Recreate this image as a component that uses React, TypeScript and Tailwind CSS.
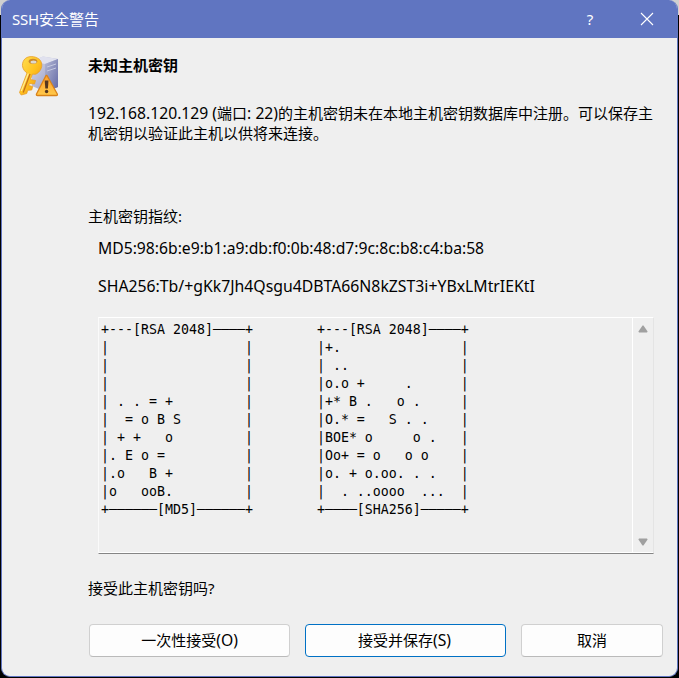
import type { ReactNode } from "react";

const ART = [
  "+---[RSA 2048]────+        +---[RSA 2048]────+",
  "|                 |        |+.               |",
  "|                 |        | ..              |",
  "|                 |        |o.o +     .      |",
  "| . . = +         |        |+* B .   o .     |",
  "|  = o B S        |        |O.* =   S . .    |",
  "| + +   o         |        |BOE* o     o .   |",
  "|. E o =          |        |Oo+ = o   o o    |",
  "|.o   B +         |        |o. + o.oo. . .   |",
  "|o   ooB.         |        |  . ..oooo  ...  |",
  "+──────[MD5]──────+        +────[SHA256]─────+",
];

function KeyIcon() {
  return (
    <svg width="42" height="44" viewBox="0 0 42 44" aria-hidden="true">
      <defs>
        <linearGradient id="box" x1="0" x2="1" y1="0" y2="1">
          <stop offset="0" stopColor="#d8daea" />
          <stop offset="1" stopColor="#8c91bd" />
        </linearGradient>
        <linearGradient id="side" x1="0" x2="1" y1="0" y2="1">
          <stop offset="0" stopColor="#b4b8d4" />
          <stop offset="1" stopColor="#6167a5" />
        </linearGradient>
        <linearGradient id="gold" x1="0" x2="1" y1="0" y2="1">
          <stop offset="0" stopColor="#ffe25a" />
          <stop offset=".5" stopColor="#ffc21f" />
          <stop offset="1" stopColor="#e88a12" />
        </linearGradient>
        <linearGradient id="warn" x1="0" x2="0" y1="0" y2="1">
          <stop offset="0" stopColor="#ff9f2c" />
          <stop offset="1" stopColor="#ffc94a" />
        </linearGradient>
      </defs>
      <path d="M14 6 25 1.500 40 4v28l-12 5-14-6z" fill="url(#box)" />
      <path d="M14 6 25 1.500 40 4 27 9z" fill="#e0e1ee" />
      <path d="M27 9 40 4v28l-13 5z" fill="url(#side)" />
      <path d="m29 12 9-3M29 16l9-3" stroke="#c5c9e0" strokeWidth="1" />
      <path
        d="M6 5C9 .5 17 .5 21.500 4.500c4 4 2.500 11-2.500 14-1.500 1-3 1-4.500.5l-2 5.500 5 1-1 3.500-5-.5-.8 2 4 1-1 3.500-4 .3-1 3.200-5.500 1.500-1.700-2.500L9 18C4.500 15 3 9.500 6 5z"
        fill="url(#gold)"
        stroke="#e8a02a"
        strokeWidth=".8"
      />
      <path d="m12 19-6.800 18.500" stroke="#c4701c" strokeWidth="1.300" />
      <path d="m10.300 18.500-7 17.500" stroke="#ffec96" strokeWidth="1.200" />
      <ellipse cx="15" cy="6.300" rx="4.300" ry="2.600" fill="#c9892c" />
      <ellipse cx="15.500" cy="7" rx="3" ry="1.600" fill="#ddd8ce" />
      <path
        d="M29 20.500 39.300 39q.5 1.500-1 1.500H19.500q-1.500 0-1-1.500L28 20.500z"
        fill="url(#warn)"
        stroke="#d98218"
        strokeWidth="1.300"
        strokeLinejoin="round"
      />
      <path d="M26.700 25.500h3.800l-.6 8h-2.600z" fill="#55371f" />
      <circle cx="28.600" cy="36.500" r="1.700" fill="#55371f" />
    </svg>
  );
}

function DialogButton({ children, className }: { children: ReactNode; className: string }) {
  return (
    <button className={`flex h-[33px] items-center justify-center rounded border bg-[#fdfdfd] pb-px ${className}`}>
      {children}
    </button>
  );
}

function Latin({ children }: { children: ReactNode }) {
  return <span className="text-[15.7px] leading-none">{children}</span>;
}

export default function App() {
  return (
    <div className="h-[678px] w-[679px] overflow-hidden bg-[linear-gradient(#d0d0d0_0_15px,#000_15px)] pr-px pl-px font-['Noto_Sans','Noto_Sans_CJK_SC',sans-serif] text-[15px] leading-5 text-black">
      <div className="flex h-[677px] flex-col overflow-hidden rounded-[9px] border-x border-b border-[#6075c1] bg-[#efefef]">
        <header className="flex h-[38px] shrink-0 items-center bg-[#6075c1] pr-px pb-px pl-[10px] text-white">
          <h1 className="grow text-[15px]">
            <span className="tracking-[-0.2px]">SSH</span>安全警告
          </h1>
          <button className="flex h-full w-[56px] items-center justify-center pt-px text-[15px]">?</button>
          <button className="flex h-full w-[58px] items-center justify-center pt-px">
            <svg width="14" height="14" viewBox="0 0 14 14" fill="none" stroke="#fff" strokeWidth="1.1">
              <path d="m1 1 12 12M13 1 1 13" />
            </svg>
          </button>
        </header>

        <main className="flex pt-[17px]">
          <div className="w-[86px] shrink-0 pl-4">
            <KeyIcon />
          </div>
          <div className="w-[580px]">
            <h2 className="h-12 font-bold">未知主机密钥</h2>
            <p className="h-[103px] whitespace-nowrap">
              <Latin>192.168.120.129 (</Latin>端口<Latin>: 22)</Latin>的主机密钥未在本地主机密钥数据库中注册。可以保存主
              <br />
              机密钥以验证此主机以供将来连接。
            </p>
            <p className="h-8">主机密钥指纹:</p>
            <p className="h-[38px] pl-[10px] text-[15.7px]">MD5:98:6b:e9:b1:a9:db:f0:0b:48:d7:9c:8c:b8:c4:ba:58</p>
            <p className="h-[41px] pl-[10px] text-[15.8px]">SHA256:Tb/+gKk7Jh4Qsgu4DBTA66N8kZST3i+YBxLMtrIEKtI</p>
            <div className="ml-[10px] flex h-[237px] w-[556px] border border-t-white border-r-[#e4e4e4] border-b-[#858585] border-l-[#fafafa]">
              <pre className="grow border-b border-white pt-[3px] pl-[2px] font-['DejaVu_Sans_Mono',monospace] text-[13.29px] leading-[18px]">
                {ART.join("\n")}
              </pre>
              <div className="flex w-[21px] flex-col items-center justify-between border-b border-l border-white pt-[7px] pb-[6px]">
                <svg width="10" height="8" viewBox="0 0 10 8">
                  <path d="M4.500.4h1L9.600 6.500 9 7.500H1L.4 6.500z" fill="#a0a0a0" />
                </svg>
                <svg width="10" height="8" viewBox="0 0 10 8">
                  <path d="M4.500 7.600h1L9.600 1.500 9 .5H1L.4 1.500z" fill="#a0a0a0" />
                </svg>
              </div>
            </div>
            <p className="mt-6 h-[46px]">接受此主机密钥吗?</p>
            <div className="flex gap-[15px] pl-px">
              <DialogButton className="w-[201px] border-[#d0d0d0] border-b-[#bababa]">
                <span>
                  一次性接受<Latin>(O)</Latin>
                </span>
              </DialogButton>
              <DialogButton className="w-[201px] border-[#0071c5]">
                <span className="-ml-0.5">
                  接受并保存<Latin>(S)</Latin>
                </span>
              </DialogButton>
              <DialogButton className="w-[142px] border-[#d0d0d0] border-b-[#bababa]">取消</DialogButton>
            </div>
          </div>
        </main>
      </div>
    </div>
  );
}
